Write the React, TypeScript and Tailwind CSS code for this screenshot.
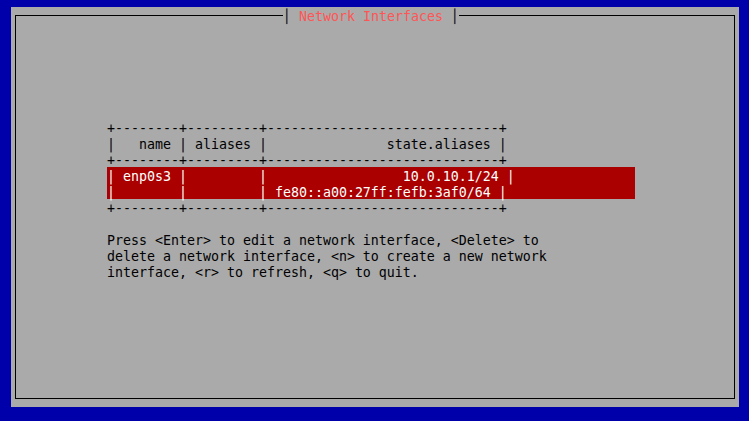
import React from 'react';

const mono = "font-['DejaVu_Sans_Mono','Liberation_Mono',monospace] text-[13.29px] leading-[16px]";
const row = 'h-[16px] pt-[2px]';

const sep = '+--------+---------+-----------------------------+';

const HELP = [
  'Press <Enter> to edit a network interface, <Delete> to',
  'delete a network interface, <n> to create a new network',
  'interface, <r> to refresh, <q> to quit.',
];

const InterfaceTable = () => (
  <div className={`${mono} whitespace-pre text-black`}>
    <div className={row}>{sep}</div>
    <div className={row}>{'|   name | aliases |               state.aliases |'}</div>
    <div className={row}>{sep}</div>
    <div className="w-[528px] bg-[#aa0000] text-white">
      <div className={row}>{'| enp0s3 |         |                 10.0.10.1/24 |'}</div>
      <div className={row}>{'|        |         | fe80::a00:27ff:fefb:3af0/64 |'}</div>
    </div>
    <div className={row}>{sep}</div>
  </div>
);

const App = () => {
  return (
    <div className="w-[749px] h-[421px] bg-[#0000aa] pt-[7px] pl-[11px] overflow-hidden">
      <div className="w-[728px] h-[400px] bg-[#aaaaaa] px-[4px] pb-[8px] flex flex-col">
        <fieldset className="flex-1 m-0 p-0 border border-black min-w-0">
          <legend className={`${mono} ml-[267px] p-0 h-[16px] whitespace-pre`}>
            <span className="relative top-[2px]">
              <span className="text-black">│</span>
              <span className="text-[#ff5555]">{' Network Interfaces '}</span>
              <span className="text-black">│</span>
            </span>
          </legend>
          <div className="ml-[91px] mt-[96px]">
            <InterfaceTable />
            <div className={`${mono} whitespace-pre text-black mt-[16px]`}>
              {HELP.map((line) => (
                <div key={line} className={row}>
                  {line}
                </div>
              ))}
            </div>
          </div>
        </fieldset>
      </div>
    </div>
  );
};

export default App;
